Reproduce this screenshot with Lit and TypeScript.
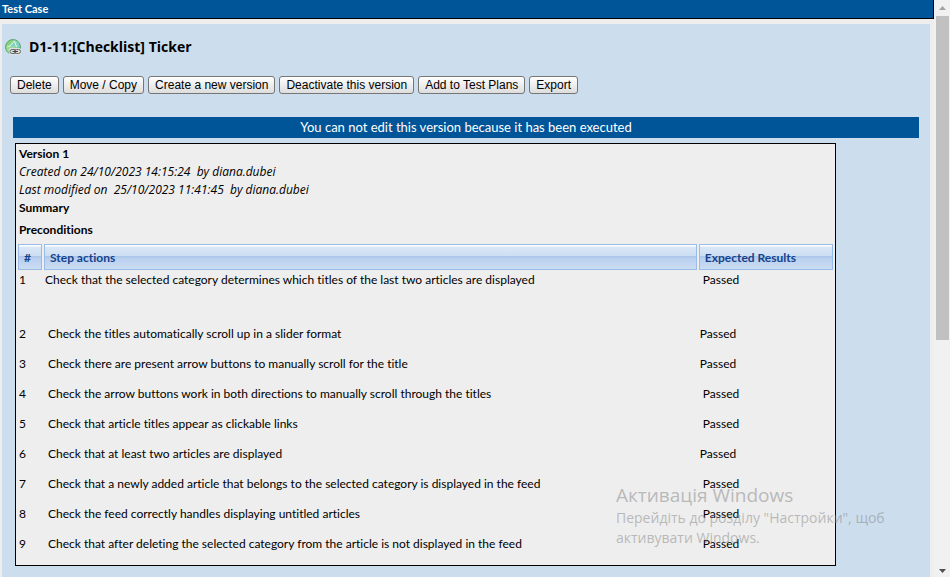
import { LitElement, html, css } from "lit";
import { customElement } from "lit/decorators.js";
import { classMap } from "lit/directives/class-map.js";

interface Step {
  text: string;
  result: string;
  tall?: boolean;
  padText?: boolean;
  padResult?: boolean;
}

const ACTIONS = [
  "Delete",
  "Move / Copy",
  "Create a new version",
  "Deactivate this version",
  "Add to Test Plans",
  "Export",
];

const STEPS: Step[] = [
  { text: "Check that the selected category determines which titles of the last two articles are displayed", result: "Passed", tall: true, padResult: true },
  { text: "Check the titles automatically scroll up in a slider format", result: "Passed", padText: true },
  { text: "Check there are present arrow buttons to manually scroll for the title", result: "Passed", padText: true },
  { text: "Check the arrow buttons work in both directions to manually scroll through the titles", result: "Passed", padText: true, padResult: true },
  { text: "Check that article titles appear as clickable links", result: "Passed", padText: true, padResult: true },
  { text: "Check that at least two articles are displayed", result: "Passed", padText: true },
  { text: "Check that a newly added article that belongs to the selected category is displayed in the feed", result: "Passed", padText: true, padResult: true },
  { text: "Check the feed correctly handles displaying untitled articles", result: "Passed", padText: true, padResult: true },
  { text: "Check that after deleting the selected category from the article is not displayed in the feed", result: "Passed", padText: true, padResult: true },
];

@customElement("app-scrollbar")
export class AppScrollbar extends LitElement {
  static styles = css`
    :host {
      display: flex;
      flex-direction: column;
      align-items: center;
      flex: 0 0 16px;
      background: #f1f1f1;
    }
    .arrow {
      flex: 0 0 16px;
      width: 16px;
      height: 16px;
    }
    .track {
      flex: 1;
      width: 100%;
      box-sizing: border-box;
      padding: 0 1px 0 2px;
    }
    .thumb {
      height: 59.5%;
      background: #c1c1c1;
    }
  `;

  render() {
    return html`
      <svg class="arrow" viewBox="0 0 16 16"><path d="M5 10h7L8.500 6z" fill="#a3a3a3" /></svg>
      <div class="track"><div class="thumb"></div></div>
      <svg class="arrow" viewBox="0 0 16 16"><path d="M5 8h7L8.500 12z" fill="#505050" /></svg>
    `;
  }
}

@customElement("app-root")
export class AppRoot extends LitElement {
  static styles = css`
    :host {
      display: flex;
      height: 100vh;
      overflow: hidden;
      background: #eee;
      color: #000;
      font: 12px/18px "Trebuchet MS", Lato, sans-serif;
      font-variant-ligatures: none;
    }
    .page {
      flex: 1;
      min-width: 0;
      display: flex;
      flex-direction: column;
    }
    .title {
      margin: 0;
      padding-left: 2px;
      background: #059;
      border: solid #000;
      border-width: 0 1px 1px 0;
      color: #fff;
      font-size: 11px;
      line-height: 18px;
      font-weight: 700;
    }
    .panel {
      flex: 1;
      margin: 5px 4px 0 2px;
      padding: 11px 8px;
      background: #cde;
    }
    .name {
      display: flex;
      align-items: center;
      gap: 8px;
      margin: 0 0 0 -5px;
      font-family: "Trebuchet MS", "Open Sans", sans-serif;
      font-size: 14px;
      line-height: 24px;
      font-weight: 700;
    }
    .globe {
      width: 16px;
      height: 16px;
    }
    .actions {
      display: flex;
      gap: 4px;
      margin: 17px 0 23px;
    }
    .action {
      height: 18px;
      padding: 0 6px;
      border: 1px solid #767676;
      border-radius: 3px;
      background: linear-gradient(#fff, #ddd);
      color: #000;
      font: 12px/16px Arial, "Liberation Sans", sans-serif;
    }
    .notice {
      margin: 0 3px;
      background: #059;
      color: #fff;
      font-size: 13px;
      line-height: 21px;
      text-align: center;
    }
    .version {
      box-sizing: border-box;
      width: 90%;
      margin: 5px;
      padding: 1px 2px;
      border: 1px solid #000;
      background: #eee;
    }
    .line {
      margin: 0;
      padding-left: 1px;
      white-space: pre;
    }
    .strong {
      font-weight: 700;
    }
    .dated {
      font-family: "Trebuchet MS", "Open Sans", sans-serif;
      font-style: italic;
    }
    .pre {
      margin: 4px 0 5px;
    }
    .steps {
      width: calc(100% + 4px);
      margin: 0 -2px;
      table-layout: fixed;
      border-collapse: separate;
      border-spacing: 2px 0;
    }
    .num {
      width: 24px;
    }
    .expected {
      width: 134px;
    }
    .head {
      box-sizing: border-box;
      height: 26px;
      padding: 1px 5px 0;
      border: 1px solid #99bbe8;
      background: linear-gradient(#fff 0 1px, #dae7f6 2px, #cddef3 11px, #abc7ec 11px 12px, #b8cfee 13px, #cbddf3);
      color: #15428b;
      text-align: left;
      font-weight: 700;
    }
    .cell {
      height: 30px;
      padding: 1px;
      box-sizing: border-box;
      vertical-align: top;
    }
    .tall {
      height: 54px;
    }
    .pad {
      padding-left: 4px;
    }
    .watermark {
      position: absolute;
      left: 616px;
      top: 483px;
      color: rgba(130, 130, 130, 0.5);
      font: 14px/20px "Segoe UI", "Open Sans", sans-serif;
      pointer-events: none;
    }
    .watermark-title {
      margin: 0;
      font-size: 19px;
      line-height: 25px;
    }
    .watermark-text {
      margin: 0;
    }
  `;

  private renderStep(step: Step, index: number) {
    const cell = (pad?: boolean) => classMap({ cell: true, tall: !!step.tall, pad: !!pad });
    return html`
      <tr>
        <td class=${cell()}>${index + 1}</td>
        <td class=${cell(step.padText)}>${step.text}</td>
        <td class=${cell(step.padResult)}>${step.result}</td>
      </tr>
    `;
  }

  render() {
    return html`
      <main class="page">
        <h1 class="title">Test Case</h1>
        <section class="panel">
          <h2 class="name">
            <svg class="globe" viewBox="0 0 16 16">
              <defs>
                <linearGradient id="land" x1="0" y1="0" x2="1" y2="1">
                  <stop offset="0" stop-color="#6cc166" />
                  <stop offset="0.500" stop-color="#a5dfa2" />
                  <stop offset="1" stop-color="#3f9d58" />
                </linearGradient>
              </defs>
              <circle cx="8" cy="8" r="7.500" fill="url(#land)" stroke="#5fa976" />
              <path d="M9 1.500C12 2 14.500 4.500 14.500 8L12 9 9 7 7 8 5 7 8 4z" fill="#7fd0c8" />
              <path d="M9.500 2L5 7l-3 1M9.500 2l2 6" stroke="#e4fae2" fill="none" />
              <rect x="4" y="9" width="12" height="7" rx="2" fill="#dfe3e2" />
              <rect x="5" y="10.500" width="6" height="4" rx="2" fill="none" stroke="#666" />
              <rect x="9.500" y="10.500" width="6" height="4" rx="2" fill="none" stroke="#666" />
              <path d="M7.500 12.500h5.500" stroke="#444" />
            </svg>
            D1-11:[Checklist] Ticker
          </h2>
          <div class="actions">
            ${ACTIONS.map((label) => html`<button class="action" type="button">${label}</button>`)}
          </div>
          <div class="notice">You can not edit this version because it has been executed</div>
          <article class="version">
            <p class="line strong">Version 1</p>
            <p class="line dated">Created on 24/10/2023 14:15:24  by diana.dubei</p>
            <p class="line dated">Last modified on  25/10/2023 11:41:45  by diana.dubei</p>
            <p class="line strong">Summary</p>
            <p class="line strong pre">Preconditions</p>
            <table class="steps">
              <thead>
                <tr>
                  <th class="head num">#</th>
                  <th class="head">Step actions</th>
                  <th class="head expected">Expected Results</th>
                </tr>
              </thead>
              <tbody>
                ${STEPS.map((step, i) => this.renderStep(step, i))}
              </tbody>
            </table>
          </article>
        </section>
      </main>
      <app-scrollbar></app-scrollbar>
      <div class="watermark">
        <p class="watermark-title">Активація Windows</p>
        <p class="watermark-text">Перейдіть до розділу "Настройки", щоб<br />активувати Windows.</p>
      </div>
    `;
  }
}
